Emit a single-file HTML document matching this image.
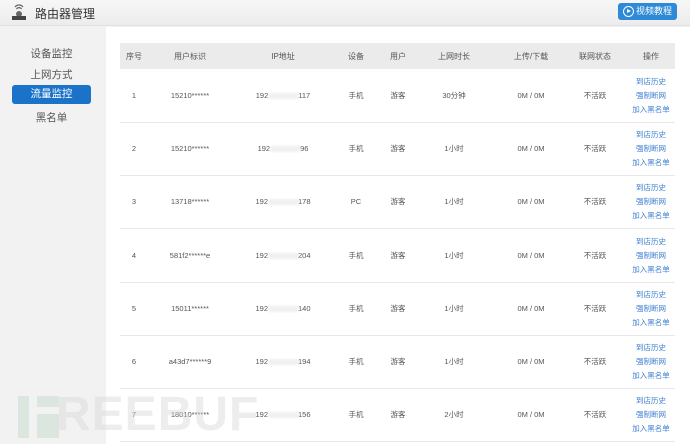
<!DOCTYPE html><html><head><meta charset="utf-8"><style>
*{margin:0;padding:0;box-sizing:border-box}
body{width:690px;height:444px;overflow:hidden;background:#f2f2f2;font-family:"Liberation Sans","Noto Sans CJK SC",sans-serif;position:relative;color:#555}
.hdr{position:absolute;left:0;top:0;width:690px;height:26px;background:linear-gradient(#f7f7f7,#ececec);border-bottom:1px solid #e2e2e2}
.title{position:absolute;left:35px;top:5px;font-size:12px;color:#333}
.btn{position:absolute;left:618px;top:3px;width:59px;height:17px;background:#2e8ad6;border-radius:3px;color:#fff;font-size:9px;line-height:17px;padding-left:18px}
.btn i{position:absolute;left:5px;top:3px;width:11px;height:11px;border:1.3px solid #fff;border-radius:50%}
.btn i:after{content:"";position:absolute;left:3px;top:2px;border-left:4px solid #fff;border-top:2.5px solid transparent;border-bottom:2.5px solid transparent}
.side div{position:absolute;left:12px;width:79px;text-align:center;font-size:10.5px;color:#555}
.main{position:absolute;left:106px;top:27px;width:584px;height:417px;background:#fff}
.th{position:absolute;left:120px;top:43px;width:555px;height:26px;background:#ebebeb}
.c{position:absolute;font-size:7.5px;line-height:10px;text-align:center;transform:translateX(-50%);white-space:nowrap;color:#555}
.h{font-size:8px;color:#555}
.sep{position:absolute;left:120px;width:555px;height:1px;background:#e8e8e8}
.a{color:#3d7fd0}
.blur{display:inline-block;width:30px;height:6px;background:#f0f0f0;vertical-align:top;margin-top:2px;filter:blur(1px)}
.wm{position:absolute;left:56px;top:391px;font-size:48px;font-weight:bold;color:rgba(215,215,215,.45);letter-spacing:1px;line-height:48px}
</style></head><body>
<div class="hdr">
<svg style="position:absolute;left:11px;top:3px" width="16" height="19" viewBox="0 0 16 19"><path d="M4 4a5 5 0 0 1 8 0M5.5 6a3 3 0 0 1 5 0" stroke="#666" fill="none" stroke-width="1.2"/><circle cx="8" cy="11" r="3" fill="#666"/><rect x="1" y="13" width="14" height="4" fill="#444"/></svg>
<div class="title">路由器管理</div>
<div class="btn"><i></i>视频教程</div>
</div>
<div class="side">
<div style="top:46px">设备监控</div>
<div style="top:67px">上网方式</div>
<div style="top:85px;height:19px;line-height:19px;background:#1a72c9;color:#fff;border-radius:3px">流量监控</div>
<div style="top:110px">黑名单</div>
</div>
<div class="main"></div>
<div class="th"></div>
<div class="c h" style="left:134px;top:52px">序号</div>
<div class="c h" style="left:190px;top:52px">用户标识</div>
<div class="c h" style="left:283px;top:52px">IP地址</div>
<div class="c h" style="left:356px;top:52px">设备</div>
<div class="c h" style="left:398px;top:52px">用户</div>
<div class="c h" style="left:454px;top:52px">上网时长</div>
<div class="c h" style="left:531px;top:52px">上传/下载</div>
<div class="c h" style="left:595px;top:52px">联网状态</div>
<div class="c h" style="left:651px;top:52px">操作</div>
<div id="rows"></div>
<div style="position:absolute;left:18px;top:396px;width:11px;height:42px;background:rgba(190,215,200,.45)"></div>
<div style="position:absolute;left:37px;top:396px;width:22px;height:11px;background:rgba(190,215,200,.45)"></div>
<div style="position:absolute;left:37px;top:414px;width:22px;height:24px;background:rgba(190,215,200,.45)"></div>
<div class="wm">REEBUF</div>
<script>
var d=[["1","15210******","117","手机","30分钟"],["2","15210******","96","手机","1小时"],["3","13718******","178","PC","1小时"],["4","581f2******e","204","手机","1小时"],["5","15011******","140","手机","1小时"],["6","a43d7******9","194","手机","1小时"],["7","18010******","156","手机","2小时"]];
var h="";d.forEach(function(r,i){var y=91+i*53.2;
h+='<div class="c" style="left:134px;top:'+y+'px">'+r[0]+'</div><div class="c" style="left:190px;top:'+y+'px">'+r[1]+'</div><div class="c" style="left:283px;top:'+y+'px">192<span class="blur"></span>'+r[2]+'</div><div class="c" style="left:356px;top:'+y+'px">'+r[3]+'</div><div class="c" style="left:398px;top:'+y+'px">游客</div><div class="c" style="left:454px;top:'+y+'px">'+r[4]+'</div><div class="c" style="left:531px;top:'+y+'px">0M / 0M</div><div class="c" style="left:595px;top:'+y+'px">不活跃</div><div class="c a" style="left:651px;top:'+(y-14)+'px">到店历史</div><div class="c a" style="left:651px;top:'+y+'px">强制断网</div><div class="c a" style="left:651px;top:'+(y+14)+'px">加入黑名单</div><div class="sep" style="top:'+(y+31)+'px"></div>';});
document.getElementById("rows").innerHTML=h;
</script>
</body></html>
